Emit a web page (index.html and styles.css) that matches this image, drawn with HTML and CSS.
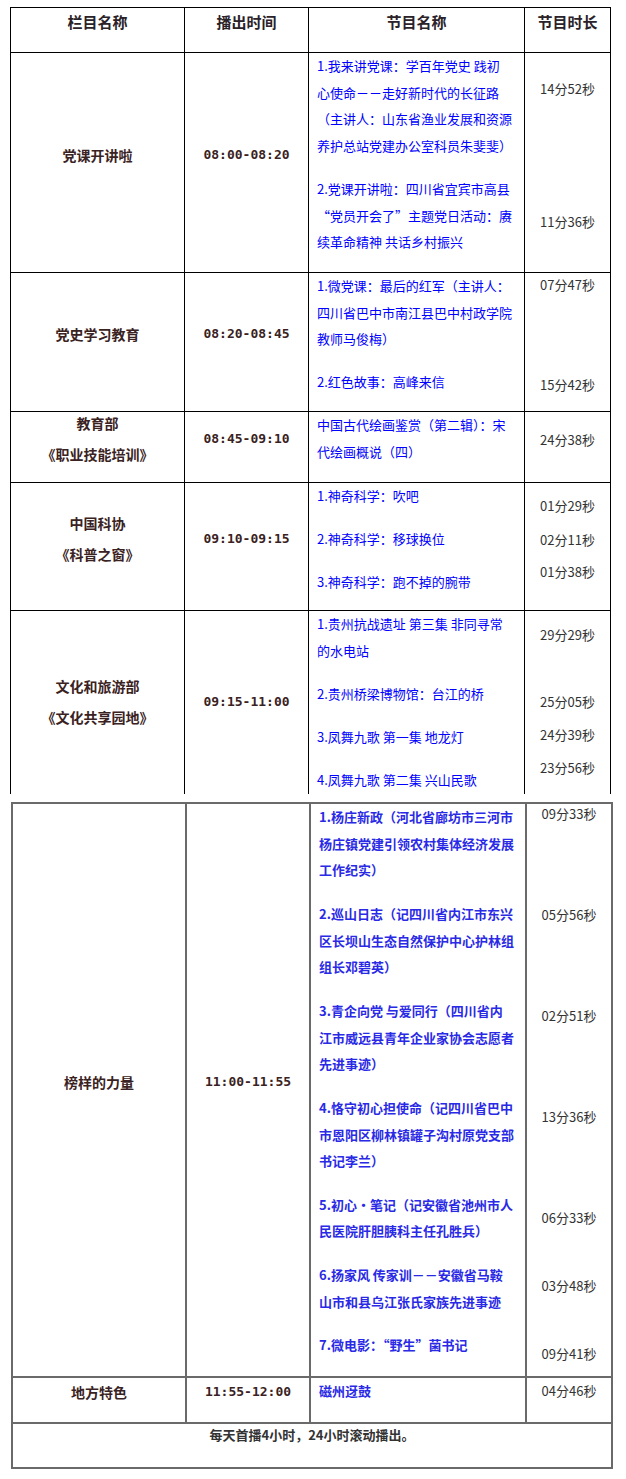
FILE: index.html
```html
<!DOCTYPE html>
<html lang="zh-CN">
<head>
<meta charset="utf-8">
<title>节目表</title>
<link rel="stylesheet" href="styles.css">
</head>
<body>
<div class="page">
  <table class="sched sched-a">
    <colgroup>
      <col class="c1"><col class="c2"><col class="c3"><col class="c4">
    </colgroup>
    <thead>
      <tr class="h-head">
        <th>栏目名称</th>
        <th>播出时间</th>
        <th>节目名称</th>
        <th>节目时长</th>
      </tr>
    </thead>
    <tbody>
      <tr class="h-r1">
        <td class="col"><div class="lbl">党课开讲啦</div></td>
        <td class="time"><div class="lbl">08:00-08:20</div></td>
        <td class="prog">
          <p>1.我来讲党课：学百年党史 践初<br>心使命－－走好新时代的长征路<br>（主讲人：山东省渔业发展和资源<br>养护总站党建办公室科员朱斐斐）</p>
          <p>2.党课开讲啦：四川省宜宾市高县<br>“党员开会了”主题党日活动：赓<br>续革命精神 共话乡村振兴</p>
        </td>
        <td class="durs">
          <span class="dur g26">14分52秒</span>
          <span class="dur g113">11分36秒</span>
        </td>
      </tr>
      <tr class="h-r2">
        <td class="col"><div class="lbl">党史学习教育</div></td>
        <td class="time"><div class="lbl">08:20-08:45</div></td>
        <td class="prog">
          <p>1.微党课：最后的红军（主讲人：<br>四川省巴中市南江县巴中村政学院<br>教师马俊梅）</p>
          <p>2.红色故事：高峰来信</p>
        </td>
        <td class="durs">
          <span class="dur g2">07分47秒</span>
          <span class="dur g80">15分42秒</span>
        </td>
      </tr>
      <tr class="h-r3">
        <td class="col two"><div class="lbl">教育部<br>《职业技能培训》</div></td>
        <td class="time"><div class="lbl">08:45-09:10</div></td>
        <td class="prog">
          <p>中国古代绘画鉴赏（第二辑）：宋<br>代绘画概说（四）</p>
        </td>
        <td class="durs">
          <span class="dur g18">24分38秒</span>
        </td>
      </tr>
      <tr class="h-r4">
        <td class="col two"><div class="lbl">中国科协<br>《科普之窗》</div></td>
        <td class="time"><div class="lbl">09:10-09:15</div></td>
        <td class="prog">
          <p>1.神奇科学：吹吧</p>
          <p>2.神奇科学：移球换位</p>
          <p>3.神奇科学：跑不掉的腕带</p>
        </td>
        <td class="durs">
          <span class="dur g13">01分29秒</span>
          <span class="dur g14">02分11秒</span>
          <span class="dur g12">01分38秒</span>
        </td>
      </tr>
      <tr class="h-r5">
        <td class="col two"><div class="lbl flat">文化和旅游部<br>《文化共享园地》</div></td>
        <td class="time"><div class="lbl flat">09:15-11:00</div></td>
        <td class="prog">
          <p>1.贵州抗战遗址 第三集 非同寻常<br>的水电站</p>
          <p>2.贵州桥梁博物馆：台江的桥</p>
          <p>3.凤舞九歌 第一集 地龙灯</p>
          <p>4.凤舞九歌 第二集 兴山民歌</p>
        </td>
        <td class="durs">
          <span class="dur g14">29分29秒</span>
          <span class="dur g47">25分05秒</span>
          <span class="dur g13">24分39秒</span>
          <span class="dur g13">23分56秒</span>
        </td>
      </tr>
    </tbody>
  </table>

  <table class="sched sched-b">
    <colgroup>
      <col class="c1"><col class="c2"><col class="c3"><col class="c4">
    </colgroup>
    <tbody>
      <tr class="h-r6">
        <td class="col"><div class="lbl">榜样的力量</div></td>
        <td class="time"><div class="lbl">11:00-11:55</div></td>
        <td class="prog">
          <p>1.杨庄新政（河北省廊坊市三河市<br>杨庄镇党建引领农村集体经济发展<br>工作纪实）</p>
          <p>2.巡山日志（记四川省内江市东兴<br>区长坝山生态自然保护中心护林组<br>组长邓碧英）</p>
          <p>3.青企向党 与爱同行（四川省内<br>江市威远县青年企业家协会志愿者<br>先进事迹）</p>
          <p>4.恪守初心担使命（记四川省巴中<br>市恩阳区柳林镇罐子沟村原党支部<br>书记李兰）</p>
          <p>5.初心·笔记（记安徽省池州市人<br>民医院肝胆胰科主任孔胜兵）</p>
          <p>6.扬家风 传家训－－安徽省马鞍<br>山市和县乌江张氏家族先进事迹</p>
          <p>7.微电影：“野生”菌书记</p>
        </td>
        <td class="durs">
          <span class="dur g0">09分33秒</span>
          <span class="dur g81">05分56秒</span>
          <span class="dur g81">02分51秒</span>
          <span class="dur g81">13分36秒</span>
          <span class="dur g81">06分33秒</span>
          <span class="dur g48">03分48秒</span>
          <span class="dur g48">09分41秒</span>
        </td>
      </tr>
      <tr class="h-r7">
        <td class="col"><div class="lbl">地方特色</div></td>
        <td class="time"><div class="lbl">11:55-12:00</div></td>
        <td class="prog"><p>磁州迓鼓</p></td>
        <td class="durs"><span class="dur g3">04分46秒</span></td>
      </tr>
      <tr class="h-foot">
        <td class="foot" colspan="4"><div class="lbl low">每天首播4小时，24小时滚动播出。</div></td>
      </tr>
    </tbody>
  </table>
</div>
</body>
</html>
```

FILE: styles.css
```css
body {
  margin: 0;
  background: #ffffff;
  font-family: "Noto Sans CJK SC", "Noto Sans", sans-serif;
  color: #222;
}

.page {
  padding: 7px 0 0 10px;
}

th,
td {
  padding: 0;
}

.sched {
  border-collapse: collapse;
  table-layout: fixed;
  width: 600px;
}

.c1 { width: 174px; }
.c2 { width: 124px; }
.c3 { width: 216px; }
.c4 { width: 86px; }

.sched th,
.sched td {
  border: 1px solid #000;
}

.sched-a tr:last-child td {
  border-bottom: none;
}

.sched-b {
  margin: 8px 0 0 1px;
}

.sched-b td {
  border: 2px solid #6a6a6a;
}

.sched th {
  font-size: 15px;
  font-weight: 700;
  color: #2a2228;
  vertical-align: middle;
  padding-bottom: 16px;
  line-height: 20px;
}

.h-head { height: 45px; }
.h-r1 { height: 220px; }
.h-r2 { height: 139px; }
.h-r3 { height: 71px; }
.h-r4 { height: 128px; }
.h-r5 { height: 181px; }
.h-r6 { height: 574px; }
.h-r7 { height: 46px; }
.h-foot { height: 45px; }

.lbl {
  margin-top: -16px;
}

.lbl.flat {
  margin-top: 0;
}

.lbl.low {
  margin-top: -20px;
}

.col {
  text-align: center;
  vertical-align: middle;
  font-size: 14px;
  font-weight: 700;
  color: #3a2222;
  line-height: 20px;
}

.col.two {
  line-height: 31px;
}

.time {
  text-align: center;
  vertical-align: middle;
  font-family: "DejaVu Sans Mono", "Noto Sans CJK SC", monospace;
  font-size: 13px;
  font-weight: 700;
  color: #3a2222;
  line-height: 20px;
}

.prog {
  vertical-align: top;
  padding-left: 8px;
  font-size: 13px;
  color: #0000ff;
}

.prog p {
  margin: 0 0 16.6px;
  line-height: 26.6px;
  white-space: nowrap;
}

.prog p:last-child {
  margin-bottom: 0;
}

.sched-b .prog {
  color: #2a2ae6;
  font-weight: 600;
}

.sched-b .prog p {
  line-height: 26.8px;
}

.durs {
  vertical-align: top;
  text-align: center;
  font-size: 13px;
  color: #333;
}

.dur {
  display: block;
  line-height: 20px;
}

.g0 { margin-top: 0; }
.g2 { margin-top: 2px; }
.g3 { margin-top: 3px; }
.g12 { margin-top: 12px; }
.g13 { margin-top: 13px; }
.g14 { margin-top: 14px; }
.g18 { margin-top: 18px; }
.g26 { margin-top: 26px; }
.g47 { margin-top: 47px; }
.g48 { margin-top: 48px; }
.g80 { margin-top: 80px; }
.g81 { margin-top: 81px; }
.g113 { margin-top: 113px; }

.foot {
  text-align: center;
  vertical-align: middle;
  font-size: 13px;
  font-weight: 700;
  color: #333;
  line-height: 20px;
}
```
